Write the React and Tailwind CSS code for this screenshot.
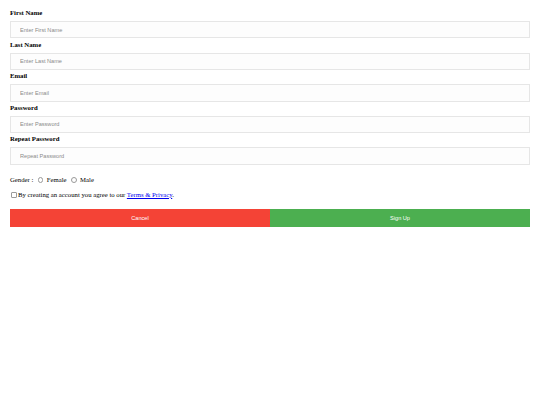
import React from 'react'

const fields = [
  { label: 'First Name', placeholder: 'Enter First Name' },
  { label: 'Last Name', placeholder: 'Enter Last Name' },
  { label: 'Email', placeholder: 'Enter Email' },
  { label: 'Password', placeholder: 'Enter Password' },
  { label: 'Repeat Password', placeholder: 'Repeat Password' },
]

function Radio({ label }) {
  return (
    <span className="inline-flex items-center">
      <span className="mx-[2.5px] inline-block h-[5.5px] w-[5.5px] rounded-full border-[0.7px] border-[#9a9a9a] bg-white" />
      <span className="ml-[1px]">{label}</span>
    </span>
  )
}

export default function App() {
  return (
    <div className="min-h-[405px] w-full bg-white font-['Liberation_Serif',serif] text-[6.72px] text-black">
      <form className="px-[10px] pt-[8px]">
        {fields.map((field) => (
          <div key={field.label} className="h-[31.6px]">
            <label className="block h-[10px] font-bold leading-[10px]">{field.label}</label>
            <input
              type="text"
              placeholder={field.placeholder}
              className="mt-[3px] block h-[17.4px] w-full border border-[#e6e6e6] bg-[#fdfdfd] pl-[9px] font-['Liberation_Sans',sans-serif] text-[5.6px] outline-none placeholder:text-[#8a8a8a]"
            />
          </div>
        ))}

        <div className="mt-[9px] flex h-[10px] items-center">
          <span>Gender :</span>
          <span className="ml-[2px] inline-flex items-center gap-[2px]">
            <Radio label="Female" />
            <Radio label="Male" />
          </span>
        </div>

        <div className="mt-[5px] flex h-[10px] items-center">
          <span className="ml-[1px] mr-[1.5px] inline-block h-[5.5px] w-[5.5px] rounded-[1px] border-[0.7px] border-[#9a9a9a] bg-white" />
          <span>
            By creating an account you agree to our{' '}
            <a href="#" className="text-[#0000ee] underline">
              Terms &amp; Privacy
            </a>
            .
          </span>
        </div>

        <div className="mt-[9px] flex">
          <button
            type="button"
            className="h-[18px] flex-1 bg-[#f44336] font-['Liberation_Sans',sans-serif] text-[5.6px] text-white"
          >
            Cancel
          </button>
          <button
            type="button"
            className="h-[18px] flex-1 bg-[#4caf50] font-['Liberation_Sans',sans-serif] text-[5.6px] text-white"
          >
            Sign Up
          </button>
        </div>
      </form>
    </div>
  )
}
